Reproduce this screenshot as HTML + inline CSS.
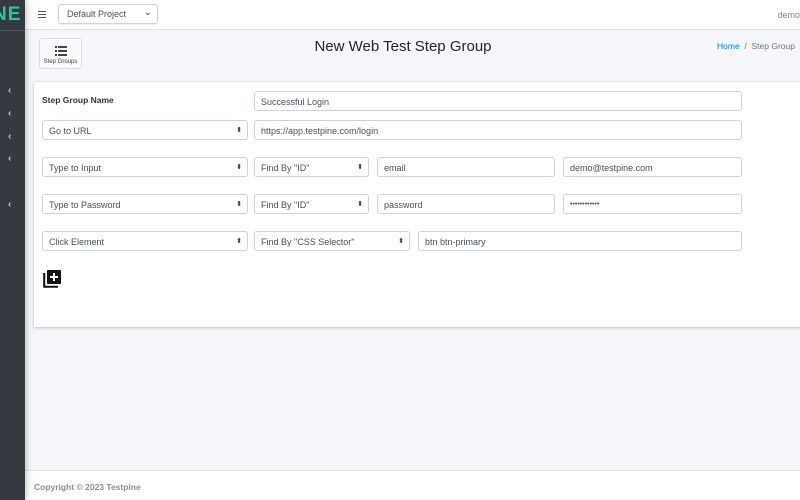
<!DOCTYPE html>
<html><head><meta charset="utf-8"><style>
*{box-sizing:border-box;margin:0;padding:0}
body{width:800px;height:500px;overflow:hidden;background:#f4f6f9;font-family:"Liberation Sans",sans-serif;position:relative;color:#212529}
.sb{position:absolute;left:0;top:0;width:25px;height:500px;background:#343a40;box-shadow:2px 0 6px rgba(0,0,0,.2);overflow:hidden;z-index:2}
.logo{position:absolute;left:-7px;top:4px;font-size:19px;font-weight:bold;color:#2ec4a0;letter-spacing:1px}
.sbl{position:absolute;left:0;top:30px;width:25px;border-top:1px solid #4b545c}
.chev{position:absolute;left:8px;color:#c2c7d0;font-size:10px;font-weight:bold}
.top{position:absolute;left:25px;top:0;right:0;height:30px;background:#fff;border-bottom:1px solid #dee2e6}
.ham{position:absolute;left:13px;top:11px;width:8px;height:7px;border-top:1.5px solid #555;border-bottom:1.5px solid #555}
.ham:after{content:"";position:absolute;left:0;top:1.5px;width:8px;border-top:1.5px solid #555}
.psel{position:absolute;left:33px;top:4px;width:100px;height:20px;border:1px solid #ced4da;border-radius:3px;font-size:9px;color:#495057;padding:4px 8px;box-shadow:0 1px 2px rgba(0,0,0,.08)}
.psel:after{content:"⌄";position:absolute;right:5px;top:2px;font-size:10px}
.demo{position:absolute;right:0;top:10px;font-size:9px;color:#888}
.sgb{position:absolute;left:39px;top:38px;width:43px;height:31px;background:#f8f9fa;border:1px solid #ddd;border-radius:3px;font-size:6px;color:#444;text-align:center}
.title{position:absolute;left:0;width:806px;top:38px;text-align:center;font-size:15px;color:#212529}
.bc{position:absolute;left:717px;top:41px;font-size:8.5px;color:#6c757d;white-space:nowrap}
.bc a{color:#007bff}
.card{position:absolute;left:34px;top:82px;width:780px;height:245px;background:#fff;box-shadow:0 0 1px rgba(0,0,0,.13),0 1px 3px rgba(0,0,0,.2)}
.lbl{position:absolute;left:42px;top:95px;font-size:8.5px;font-weight:bold;color:#333}
.f{position:absolute;height:20px;border:1px solid #ced4da;border-radius:3px;background:#fff;font-size:9px;color:#495057;padding:5px 6px;white-space:nowrap;overflow:hidden}
.s:after{content:"⬍";position:absolute;right:5px;top:5px;font-size:7px;color:#333}
.foot{position:absolute;left:25px;top:470px;right:0;height:30px;background:#fff;border-top:1px solid #dee2e6}
.foot span{position:absolute;left:9px;top:11px;font-size:8.5px;font-weight:bold;color:#869099}
</style></head><body>
<div class="sb"><div class="logo">NE</div><div class="sbl"></div>
<div class="chev" style="top:85px">‹</div><div class="chev" style="top:108px">‹</div><div class="chev" style="top:131px">‹</div><div class="chev" style="top:153px">‹</div><div class="chev" style="top:199px">‹</div></div>
<div class="top"><div class="ham"></div><div class="psel">Default Project</div><div class="demo">demo</div></div>
<div class="sgb"><svg width="12" height="10" viewBox="0 0 12 10" style="margin-top:7px"><g fill="#444"><rect x="0" y="0" width="2" height="2"/><rect x="3" y="0" width="9" height="2"/><rect x="0" y="4" width="2" height="2"/><rect x="3" y="4" width="9" height="2"/><rect x="0" y="8" width="2" height="2"/><rect x="3" y="8" width="9" height="2"/></g></svg><div style="margin-top:1px">Step Groups</div></div>
<div class="title">New Web Test Step Group</div>
<div class="bc"><a>Home</a> &nbsp;/&nbsp; Step Group &nbsp;/</div>
<div class="card"></div>
<div class="lbl">Step Group Name</div>
<div class="f" style="left:254px;top:91px;width:488px">Successful Login</div>
<div class="f s" style="left:42px;top:120px;width:206px">Go to URL</div>
<div class="f" style="left:254px;top:120px;width:488px">https://app.testpine.com/login</div>
<div class="f s" style="left:42px;top:157px;width:206px">Type to Input</div>
<div class="f s" style="left:254px;top:157px;width:115px">Find By "ID"</div>
<div class="f" style="left:377px;top:157px;width:178px">email</div>
<div class="f" style="left:563px;top:157px;width:179px">demo@testpine.com</div>
<div class="f s" style="left:42px;top:194px;width:206px">Type to Password</div>
<div class="f s" style="left:254px;top:194px;width:115px">Find By "ID"</div>
<div class="f" style="left:377px;top:194px;width:178px">password</div>
<div class="f" style="left:563px;top:194px;width:179px;font-size:7px;padding-top:6px">••••••••••••</div>
<div class="f s" style="left:42px;top:231px;width:206px">Click Element</div>
<div class="f s" style="left:254px;top:231px;width:156px">Find By "CSS Selector"</div>
<div class="f" style="left:418px;top:231px;width:324px">btn btn-primary</div>
<svg style="position:absolute;left:43px;top:269px" width="19" height="19" viewBox="0 0 19 19"><path d="M1.2 4v13.8h13.8" fill="none" stroke="#111" stroke-width="2"/><rect x="4" y="1" width="14" height="14" rx="1" fill="#111"/><path d="M11 4v8M7 8h8" stroke="#fff" stroke-width="2"/></svg>
<div class="foot"><span>Copyright © 2023 Testpine</span></div>
</body></html>
